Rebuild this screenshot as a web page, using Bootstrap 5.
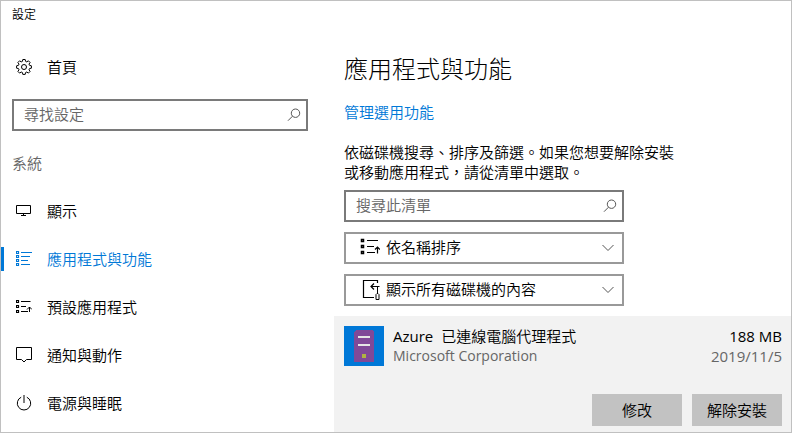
<!DOCTYPE html>
<html lang="zh-Hant">
<head>
<meta charset="utf-8">
<meta name="viewport" content="width=device-width, initial-scale=1">
<title>設定</title>
<link href="https://cdn.jsdelivr.net/npm/bootstrap@5.3.0/dist/css/bootstrap.min.css" rel="stylesheet">
<style>
  :root { --accent: #0078d7; --line: #c0c0c0; --text-weight: 350; }
  body { font-family: "Noto Sans CJK TC", sans-serif; font-size: 15px; font-weight: var(--text-weight); line-height: 20px; color: #000; background: #fff; }
  .app-window { border: 1px solid var(--line); }
  .side-pane { width: 333px; }
  .window-title { font-size: 12px; line-height: 18px; padding: 4px 11px 0; }
  .side-item { display: flex; align-items: center; height: 48px; padding-left: 15px; gap: 15px; color: #000; text-decoration: none; border-radius: 0; }
  .side-item:hover { color: #000; background: #f2f2f2; }
  .side-item svg { width: 16px; height: 16px; flex: none; }
  .side-item.home-item { margin-top: 20px; }
  .side-item.active { color: var(--accent); padding-left: 0; }
  .side-item.active::before { content: ""; width: 3px; height: 24px; margin-right: -3px; background: var(--accent); }
  .side-search { margin: 8px 26px 0 11px; }
  .group-title { font-size: 15px; line-height: 20px; font-weight: var(--text-weight); color: #666; margin: 22px 11px 14px; }
  .field .form-control, .field .form-select { height: 32px; padding: 0 32px 2px 10px; border: 2px solid #7a7a7a; border-radius: 0; font-size: 15px; font-weight: var(--text-weight); line-height: 20px; color: #000; background: #fff; box-shadow: none; }
  .field .form-control { padding-bottom: 4px; }
  .field .form-control::placeholder { color: #666; opacity: 1; }
  .field .form-select { border-color: #999; padding-left: 40px; }
  .field-icon { position: absolute; top: 0; bottom: 0; margin: auto 0; pointer-events: none; }
  .field-icon.at-end { right: 7px; }
  .field-icon.at-end.chevron { right: 10px; }
  .field-icon.at-start { left: 16px; }
  .main-top { padding: 51px 10px 10px; }
  .main-title { font-size: 24px; line-height: 32px; font-weight: 300; margin-bottom: 18px; }
  .manage-link { color: var(--accent); text-decoration: none; }
  .intro { margin: 20px 0 8px; max-width: 340px; }
  .filter-stack { max-width: 280px; gap: 10px; }
  .app-entry { background: #f2f2f2; padding: 10px 9px 6px 10px; }
  .app-text { padding-left: 9px; }
  .latin { font-family: "Open Sans", sans-serif; font-size: 15px; font-weight: 400; }
  .publisher { font-size: 14px; }
  .muted { color: #666; }
  .app-entry .btn { width: 90px; height: 32px; padding: 0; border: 0; border-radius: 0; background: #c2c2c2; color: #000; font-size: 15px; font-weight: var(--text-weight); line-height: 30px; }
  .app-actions { margin-top: 28px; gap: 10px; }
</style>
</head>
<body>
<svg class="d-none" aria-hidden="true">
  <symbol id="search" viewBox="0 0 14 14"><g fill="none" stroke="#555"><circle cx="8.5" cy="5.2" r="4.2"/><path d="M5.5 8.2 1 12.7"/></g></symbol>
  <symbol id="chevron" viewBox="0 0 12 8"><path d="M.5 1 6 6.5 11.5 1" fill="none" stroke="#555"/></symbol>
  <symbol id="sort" viewBox="0 0 16 16"><g fill="none" stroke="currentColor"><path d="M.5 1.5h2v2h-2zM.5 6.5h2v2h-2zM.5 11.5h2v2h-2z" stroke-width="1.200"/><path d="M5 2.5h9.500M5 7.500h5M5 12.500h7M13.500 13V8M11 10.500 13.500 8 16 10.500"/></g></symbol>
</svg>
<div class="app-window d-flex min-vh-100">
  <aside class="side-pane flex-shrink-0">
    <div class="window-title">設定</div>
    <a class="side-item home-item" href="#home">
      <svg viewBox="0 0 16 16" fill="none" stroke="currentColor" aria-hidden="true"><path d="M6.800.500h2.400l.4 1.900 1.200.5 1.600-1.100 1.700 1.700-1.100 1.600.5 1.200 1.900.5v2.400l-1.900.4-.5 1.200 1.100 1.600-1.700 1.700-1.600-1.100-1.200.5-.4 1.900H6.800l-.4-1.900-1.200-.5-1.600 1.100-1.700-1.700L3 10.800l-.5-1.200-1.900-.4V6.800l1.900-.5L3 5.100 1.900 3.500l1.700-1.700 1.600 1.100 1.200-.5z"/><circle cx="8" cy="8" r="2.500"/></svg>
      <span>首頁</span>
    </a>
    <div class="field side-search position-relative">
      <input class="form-control" type="search" placeholder="尋找設定" aria-label="尋找設定">
      <svg class="field-icon at-end" width="14" height="14" aria-hidden="true"><use href="#search"/></svg>
    </div>
    <h2 class="group-title">系統</h2>
    <nav class="nav flex-column" aria-label="系統">
      <a class="side-item" href="#display">
        <svg viewBox="0 0 16 16" fill="none" stroke="currentColor" aria-hidden="true"><path d="M.5 2.500h14v8H.500zM7.500 11v2M5 12.500h5"/></svg>
        <span>顯示</span>
      </a>
      <a class="side-item active" aria-current="page" href="#apps">
        <svg viewBox="0 0 16 16" fill="none" stroke="currentColor" aria-hidden="true"><path d="M.5.5h2v2h-2zM.5 4.500h2v2h-2zM.5 8.500h2v2h-2zM.5 12.500h2v2h-2z" stroke-width="1.200"/><path d="M5 1.500h11M5 5.500h9M5 9.500h7M5 13.500h9"/></svg>
        <span>應用程式與功能</span>
      </a>
      <a class="side-item" href="#defaults">
        <svg aria-hidden="true"><use href="#sort"/></svg>
        <span>預設應用程式</span>
      </a>
      <a class="side-item" href="#notifications">
        <svg viewBox="0 0 16 16" fill="none" stroke="currentColor" aria-hidden="true"><path d="M.5.500h15v12H10.500L8 15l-2.500-2.500H.500z"/></svg>
        <span>通知與動作</span>
      </a>
      <a class="side-item" href="#power">
        <svg viewBox="0 0 16 16" fill="none" stroke="currentColor" aria-hidden="true"><path d="M8 0v8M5.200 2.200a6.700 6.700 0 1 0 5.600 0"/></svg>
        <span>電源與睡眠</span>
      </a>
    </nav>
  </aside>

  <main class="flex-grow-1 d-flex flex-column">
    <div class="main-top">
      <h1 class="main-title">應用程式與功能</h1>
      <a class="manage-link d-block" href="#optional">管理選用功能</a>
      <p class="intro">依磁碟機搜尋、排序及篩選。如果您想要解除安裝或移動應用程式，請從清單中選取。</p>
      <div class="filter-stack d-flex flex-column">
        <div class="field position-relative">
          <input class="form-control" type="search" placeholder="搜尋此清單" aria-label="搜尋此清單">
          <svg class="field-icon at-end" width="14" height="14" aria-hidden="true"><use href="#search"/></svg>
        </div>
        <div class="field position-relative">
          <svg class="field-icon at-start" width="20" height="20" viewBox="0 0 20 20" fill="none" stroke="currentColor" aria-hidden="true"><path d="M1.500 1.500h2v2h-2zM1.500 7.500h2v2h-2zM1.500 13.500h2v2h-2z" stroke-width="1.500"/><path d="M7 2.500h11M7 8.500h7M7 14.500h8M17.500 15.500V9M15 11.500l2.500-2.500L20 11.500" stroke-width="1.200"/></svg>
          <select class="form-select" aria-label="排序"><option>依名稱排序</option></select>
          <svg class="field-icon at-end chevron" width="12" height="8" aria-hidden="true"><use href="#chevron"/></svg>
        </div>
        <div class="field position-relative">
          <svg class="field-icon at-start" width="20" height="20" viewBox="0 0 20 20" fill="none" stroke="currentColor" aria-hidden="true"><path d="M17.500 3V.500h-14v17H14M11 6.500h8.500M14 3.500l-3 3 3 3" stroke-width="1.200"/><path d="M17.500 7v6M16 19.500v-5l1-1h1l1 1v5z"/></svg>
          <select class="form-select" aria-label="磁碟機"><option>顯示所有磁碟機的內容</option></select>
          <svg class="field-icon at-end chevron" width="12" height="8" aria-hidden="true"><use href="#chevron"/></svg>
        </div>
      </div>
    </div>
    <section class="app-entry flex-grow-1">
      <div class="d-flex">
        <svg class="flex-shrink-0" width="40" height="40" viewBox="0 0 40 40" shape-rendering="crispEdges" aria-hidden="true"><path fill="#0078d7" d="M0 0h40v40H0z"/><path fill="#804998" d="M12 4h16l2 2v30H10V6z"/><path fill="#e6e6e6" d="M14 10h12v2H14zM14 18h12v2H14z"/><path fill="#b0b441" d="M18 28h4v4h-4z"/></svg>
        <div class="app-text flex-grow-1">
          <div class="d-flex gap-2"><span class="latin">Azure</span><span>已連線電腦代理程式</span></div>
          <div class="latin publisher muted">Microsoft Corporation</div>
        </div>
        <div class="text-end latin">
          <div>188 MB</div>
          <div class="muted">2019/11/5</div>
        </div>
      </div>
      <div class="app-actions d-flex justify-content-end">
        <button class="btn" type="button">修改</button>
        <button class="btn" type="button">解除安裝</button>
      </div>
    </section>
  </main>
</div>
<script src="https://cdn.jsdelivr.net/npm/bootstrap@5.3.0/dist/js/bootstrap.bundle.min.js"></script>
</body>
</html>
